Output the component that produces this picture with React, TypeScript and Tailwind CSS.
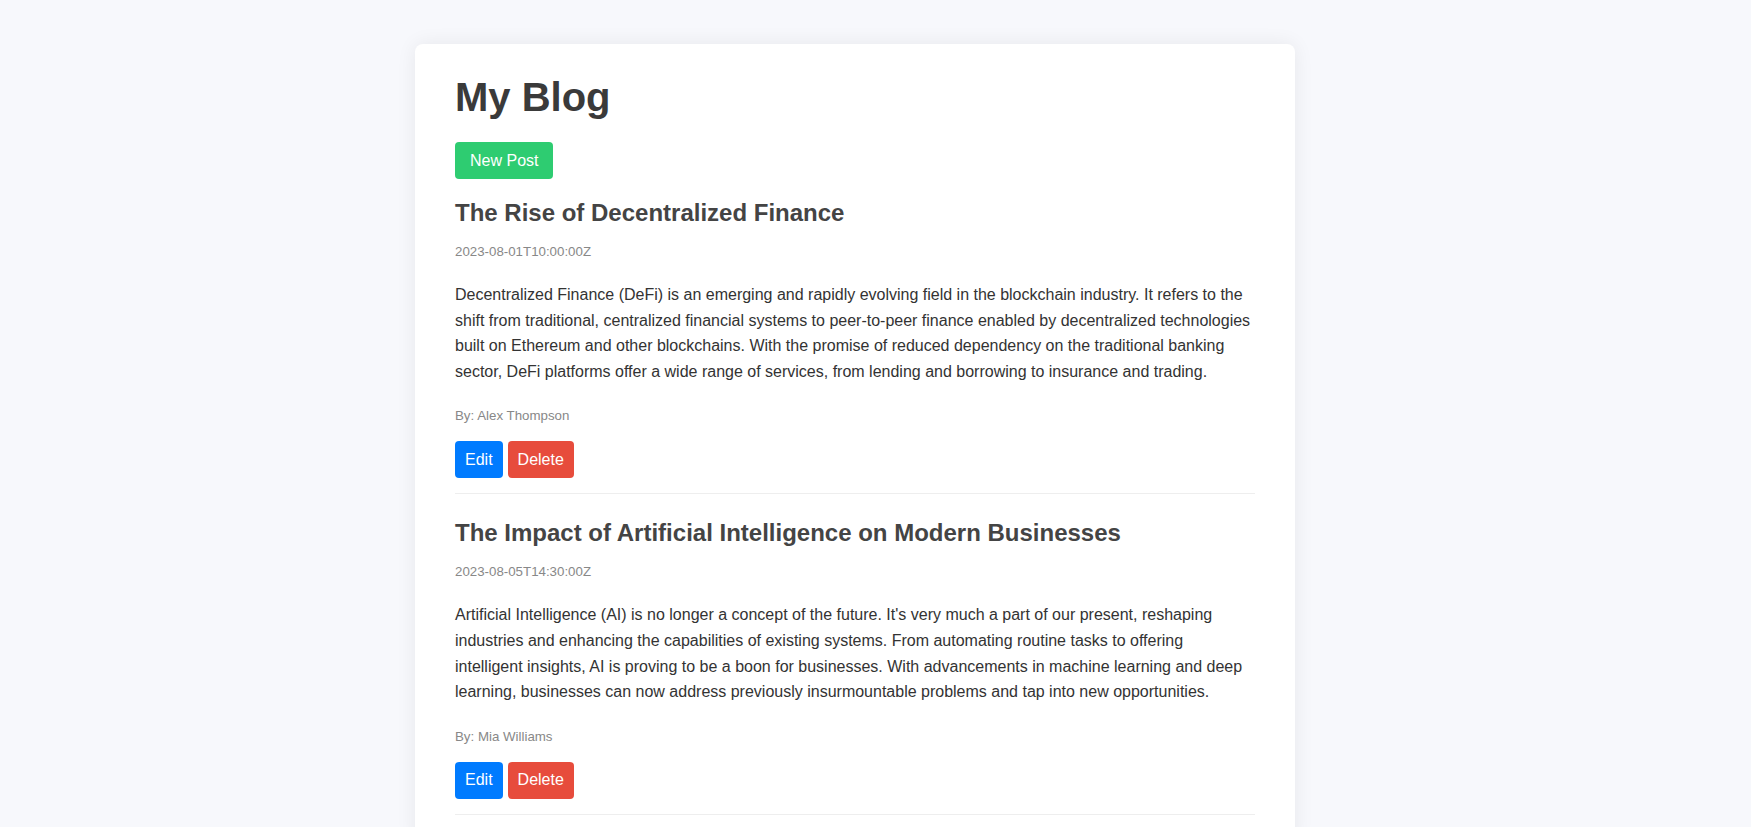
import React from 'react'

const posts = [
  {
    title: 'The Rise of Decentralized Finance',
    date: '2023-08-01T10:00:00Z',
    content:
      'Decentralized Finance (DeFi) is an emerging and rapidly evolving field in the blockchain industry. It refers to the shift from traditional, centralized financial systems to peer-to-peer finance enabled by decentralized technologies built on Ethereum and other blockchains. With the promise of reduced dependency on the traditional banking sector, DeFi platforms offer a wide range of services, from lending and borrowing to insurance and trading.',
    author: 'Alex Thompson',
  },
  {
    title: 'The Impact of Artificial Intelligence on Modern Businesses',
    date: '2023-08-05T14:30:00Z',
    content:
      "Artificial Intelligence (AI) is no longer a concept of the future. It's very much a part of our present, reshaping industries and enhancing the capabilities of existing systems. From automating routine tasks to offering intelligent insights, AI is proving to be a boon for businesses. With advancements in machine learning and deep learning, businesses can now address previously insurmountable problems and tap into new opportunities.",
    author: 'Mia Williams',
  },
]

export default function App() {
  return (
    <div className="min-h-screen bg-[#f7f8fc] pt-[44px] font-['Liberation_Sans',Arial,sans-serif]">
      {/* blog card */}
      <div className="ml-[415px] w-[880px] bg-white rounded-lg shadow-[0_0_20px_rgba(0,0,0,0.07)] px-[40px] pt-[30px] pb-[30px]">
        <h1 className="text-[40px] leading-[46px] font-bold text-[#3a3a3a]">My Blog</h1>

        <button className="mt-[22px] h-[37px] px-[15px] rounded bg-[#2ecc71] text-white text-[16px]">
          New Post
        </button>

        {/* posts */}
        <div>
          {posts.map((post, index) => (
            <div
              key={index}
              className="pt-[25px] first:pt-[20px] pb-[15px] border-b border-[#eeeeee]"
            >
              <h2 className="text-[24px] leading-[28px] font-bold text-[#444]">{post.title}</h2>
              <p className="mt-[17px] text-[13.3px] leading-[16px] text-[#888]">{post.date}</p>
              <p className="mt-[22px] text-[16px] leading-[25.6px] text-[#333]">{post.content}</p>
              <p className="mt-[24px] text-[13.3px] leading-[16px] text-[#888]">By: {post.author}</p>
              <div className="mt-[17px] flex gap-[5px]">
                <button className="h-[37px] px-[10px] rounded bg-[#007bff] text-white text-[16px]">
                  Edit
                </button>
                <button className="h-[37px] px-[10px] rounded bg-[#e74c3c] text-white text-[16px]">
                  Delete
                </button>
              </div>
            </div>
          ))}
        </div>
      </div>
    </div>
  )
}
